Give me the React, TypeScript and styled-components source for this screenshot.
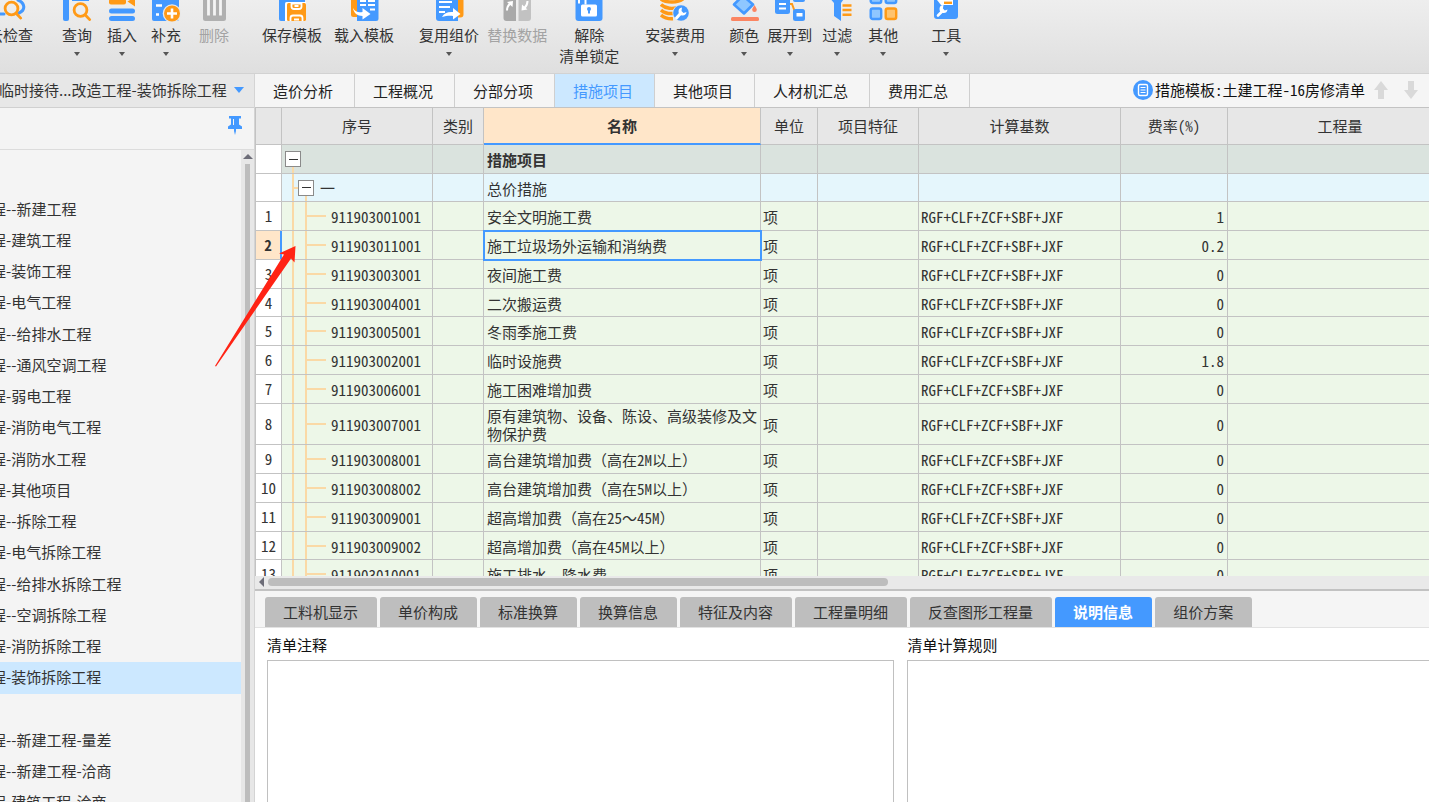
import React from 'react';
import styled, { createGlobalStyle, css } from 'styled-components';

const BLUE = '#4499ff';
const ORANGE = '#ff9a17';
const LINE = '#c3c3c3';

const GlobalStyle = createGlobalStyle`
  *, *::before, *::after { box-sizing: border-box; }
  body {
    margin: 0;
    overflow: hidden;
    font-family: 'Noto Sans CJK SC', sans-serif;
    font-size: 15px;
    color: #333;
    background: #f4f4f4;
  }
  button, textarea { font: inherit; color: inherit; margin: 0; }
  button { border: 0; padding: 0; background: none; white-space: nowrap; cursor: pointer; }
`;

/* ---------- Shell ---------- */

const Shell = styled.div`
  display: flex;
  flex-direction: column;
  height: 100vh;
  overflow: hidden;
`;

const Body = styled.div`
  position: relative;
  display: flex;
  flex: 1;
  min-height: 0;
`;

const Main = styled.main`
  display: flex;
  flex-direction: column;
  flex: 1;
  min-width: 0;
  border-left: 1px solid #d4d4d4;
`;

/* ---------- Toolbar ---------- */

const Toolbar = styled.header`
  display: flex;
  align-items: flex-start;
  flex: 0 0 74px;
  border-bottom: 1px solid #d2d2d2;
  background: linear-gradient(#eeeeee, #dfdfdf);
  overflow: hidden;
`;

const ToolButton = styled.button<{ $gap: number }>`
  display: flex;
  flex-direction: column;
  align-items: center;
  flex: none;
  margin-left: ${p => p.$gap}px;
  line-height: 21px;
  color: #333;
  &:disabled { color: #a3a3a3; cursor: default; }
`;

const ToolIcon = styled.svg`
  display: block;
  width: 30px;
  height: 24px;
`;

const Caret = styled.span`
  margin-top: 7px;
  border: 3px solid transparent;
  border-top: 4px solid #555;
  border-bottom: 0;
`;

type Tool = { label: string[]; gap: number; caret?: boolean; disabled?: boolean; icon: React.ReactNode };

const magnifier = (cx: number, cy: number) => (
  <g fill="none" stroke={ORANGE} strokeWidth="2.8" strokeLinecap="round">
    <circle cx={cx} cy={cy} r="6.4" />
    <path d={`M${cx + 4.8} ${cy + 5} l4.4 4.6`} />
  </g>
);

const tools: Tool[] = [
  {
    label: ['云检查'], gap: -12,
    icon: (
      <>
        <path d="M4 14H8M22 0c7 3 8 10 1 13" fill="none" stroke={BLUE} strokeWidth="3" strokeLinecap="round" />
        {magnifier(15.5, 8.5)}
      </>
    ),
  },
  {
    label: ['查询'], gap: 29, caret: true,
    icon: (
      <>
        <path d="M1 0h6v19a2 2 0 0 1-2 2H3a2 2 0 0 1-2-2z" fill={BLUE} />
        <path d="M10 0h17v1H10z" fill={BLUE} />
        {magnifier(18.5, 10)}
      </>
    ),
  },
  {
    label: ['插入'], gap: 15, caret: true,
    icon: (
      <>
        <rect x="2" y="-1" width="17" height="5.5" rx="2" fill={ORANGE} />
        <path d="M20.500 1.500L28 -3V6.500z" fill={ORANGE} />
        <rect x="2" y="8.500" width="26" height="5" rx="2.500" fill={BLUE} />
        <rect x="2" y="16" width="26" height="5" rx="2.500" fill={BLUE} />
      </>
    ),
  },
  {
    label: ['补充'], gap: 14, caret: true,
    icon: (
      <>
        <path d="M1 0h27v19a2 2 0 0 1-2 2H3a2 2 0 0 1-2-2z" fill={BLUE} />
        <path d="M5 5.500h6M5 14.500h3" stroke="#fff" strokeWidth="2.400" />
        <circle cx="21" cy="13.500" r="9.300" fill="#e9e9e9" />
        <circle cx="21" cy="13.500" r="8" fill={ORANGE} />
        <path d="M21 8.500v10M16 13.500h10" stroke="#fff" strokeWidth="2.600" />
      </>
    ),
  },
  {
    label: ['删除'], gap: 18, disabled: true,
    icon: (
      <>
        <path d="M4 0h23v18.500a2.500 2.500 0 0 1-2.500 2.500h-18a2.500 2.500 0 0 1-2.500-2.500z" fill="#b0b0b0" />
        <path d="M9.500 0v15.500M15.500 0v15.500M21.500 0v15.500" stroke="#f4f4f4" strokeWidth="2.800" />
      </>
    ),
  },
  {
    label: ['保存模板'], gap: 33,
    icon: (
      <>
        <path d="M2 0h26v3H10v18H4a2 2 0 0 1-2-2z" fill={BLUE} />
        <path d="M8 21V3.500A1.500 1.500 0 0 1 9.500 2H29v19z" fill="#fff" />
        <rect x="10" y="3" width="19" height="18" rx="1.500" fill={ORANGE} />
        <path d="M14.500 3.500v3a2.500 2.500 0 0 0 2.500 2.500h5a2.500 2.500 0 0 0 2.500-2.500v-3zM13.500 21v-3a2.500 2.500 0 0 1 2.500-2.500h7a2.500 2.500 0 0 1 2.500 2.500v3M17.500 6h4M17 19.500h5" fill="none" stroke="#fff" strokeWidth="1.800" />
      </>
    ),
  },
  {
    label: ['载入模板'], gap: 12,
    icon: (
      <>
        <path d="M2 0h8v17H4.500a2.500 2.500 0 0 1-2.500-2.500z" fill={ORANGE} />
        <path d="M8 0h21.500v18.500a2.500 2.500 0 0 1-2.500 2.500H8z" fill={BLUE} />
        <path d="M11 1h6M19 1h7M11 5h6M19 5h7M21 9.500h5" stroke="#fff" strokeWidth="2" />
        <path d="M4 8c2 4 6 5 9.500 4V8l8 6-8 5.500v-3.500C8.500 16 4.500 13 4 8z" fill="#fff" />
      </>
    ),
  },
  {
    label: ['复用组价'], gap: 25, caret: true,
    icon: (
      <>
        <path d="M20 0h9.500v14.500a3 3 0 0 1-3 3H20z" fill={ORANGE} />
        <path d="M2 0h22v21H5a3 3 0 0 1-3-3z" fill={BLUE} />
        <path d="M5 2h13M5 7h11M5 12h6" stroke="#fff" strokeWidth="2" />
        <path d="M8 17c2-4 6-5.500 11-5V8l7.500 6-7.500 5.500v-3.500c-4-.5-7 0-11 1z" fill="#fff" />
      </>
    ),
  },
  {
    label: ['替换数据'], gap: 8, disabled: true,
    icon: (
      <>
        <path d="M1.500 0H14v21H4.500a3 3 0 0 1-3-3z" fill="#a9a9a9" />
        <path d="M16.500 0h12.500v18a3 3 0 0 1-3 3h-9.500z" fill="#c2c2c2" />
        <path d="M5 10.500c0-3 1-5 3-7M25.500 1c0 3-1 5-3 7" fill="none" stroke="#fff" strokeWidth="2" />
        <path d="M5 2l6-1-.5 6zM25.500 9.500l-6 1 .5-6z" fill="#fff" />
      </>
    ),
  },
  {
    label: ['解除', '清单锁定'], gap: 12,
    icon: (
      <>
        <path d="M1.500 0h27v18a3 3 0 0 1-3 3h-21a3 3 0 0 1-3-3z" fill={BLUE} />
        <rect x="7" y="4.500" width="16" height="12" rx="1.500" fill="#fff" />
        <path d="M5 3.500V0M11.500 4.500V0" stroke="#fff" strokeWidth="2" />
        <circle cx="15" cy="9" r="2" fill={BLUE} />
        <path d="M15 9v4.500" stroke={BLUE} strokeWidth="2" />
      </>
    ),
  },
  {
    label: ['安装费用'], gap: 26, caret: true,
    icon: (
      <>
        <path d="M1 -1c5 4 17 4 22 0M1 4.500c5 4.500 12 4.500 16 3M1 10c4 3.500 8 3.800 12 3.500M1 15c4 3.500 8 4 12 3.700" fill="none" stroke={ORANGE} strokeWidth="3.400" />
        <circle cx="21" cy="13" r="8.600" fill="#e9e9e9" />
        <circle cx="21" cy="13" r="7.800" fill={BLUE} />
        <path d="M16.500 18l4-4.500" stroke="#fff" strokeWidth="3" strokeLinecap="round" />
        <path d="M22 7.500a4 4 0 1 0 4.500 4.500l-3 1-2-2z" fill="#fff" />
      </>
    ),
  },
  {
    label: ['颜色'], gap: 24, caret: true,
    icon: (
      <>
        <path d="M5 4.500L12 -2.500h4l8 7-9 9z" fill="#8fc7ff" stroke={BLUE} strokeWidth="2.600" strokeLinejoin="round" />
        <path d="M25.500 5c1.500 2.500 2.300 3.600 2.300 4.800a2.300 2.300 0 0 1-4.600 0C23.200 8.600 24 7.500 25.500 5z" fill="#fb8562" />
        <rect x="2" y="17" width="28" height="4" rx="1.500" fill="#fb8562" />
      </>
    ),
  },
  {
    label: ['展开到'], gap: 8, caret: true,
    icon: (
      <>
        <path d="M14 4h3l3 8" fill="none" stroke={ORANGE} strokeWidth="2" />
        <path d="M0 0h15v11.500a2.500 2.500 0 0 1-2.500 2.500h-10A2.500 2.500 0 0 1 0 11.500z" fill={BLUE} />
        <path d="M4 4h7M4 8.500h7" stroke="#fff" strokeWidth="2" />
        <rect x="18" y="-6" width="12" height="8" rx="2" fill={BLUE} />
        <rect x="18" y="9" width="12" height="12" rx="2.500" fill={BLUE} />
        <rect x="21.500" y="13" width="6" height="3.500" fill="#fff" />
      </>
    ),
  },
  {
    label: ['过滤'], gap: 10, caret: true,
    icon: (
      <>
        <path d="M6 -4h18l-5 7v18l-7-5V3z" fill={BLUE} />
        <path d="M20.500 5.500h9M20.500 10h9M20.500 14.800h9" stroke={ORANGE} strokeWidth="2.400" />
      </>
    ),
  },
  {
    label: ['其他'], gap: 16, caret: true,
    icon: (
      <g strokeWidth="2.400">
        <rect x="2.700" y="-7" width="10.500" height="10" rx="2" fill="#8fc7ff" stroke={BLUE} />
        <rect x="17.700" y="-7" width="10.500" height="10" rx="2" fill="#8fc7ff" stroke={BLUE} />
        <rect x="2.700" y="8.500" width="10.500" height="10.500" rx="2" fill="#8fc7ff" stroke={BLUE} />
        <rect x="17.700" y="8.500" width="10.500" height="10.500" rx="2" fill="#ffc36e" stroke={ORANGE} />
      </g>
    ),
  },
  {
    label: ['工具'], gap: 33, caret: true,
    icon: (
      <>
        <path d="M3 0h24v16a3 3 0 0 1-3 3H6a3 3 0 0 1-3-3z" fill={BLUE} />
        <path d="M6 0h16v5H10z" fill="#fff" />
        <path d="M13 2.800h8" stroke={ORANGE} strokeWidth="2.400" />
        <path d="M7 15.500l4.500-4.500" stroke="#fff" strokeWidth="2.600" strokeLinecap="round" />
        <path d="M12.500 5a4 4 0 1 0 4 4.500l-2.700 1-1.900-2z" fill="#fff" />
      </>
    ),
  },
];

/* ---------- Sidebar ---------- */

const Sidebar = styled.aside`
  display: flex;
  flex-direction: column;
  flex: 0 0 254px;
  min-width: 0;
  overflow: hidden;
  background: #f4f4f4;
`;

const ProjectPicker = styled.button`
  display: flex;
  align-items: center;
  justify-content: space-between;
  flex: 0 0 34px;
  padding: 0 10px 2px 0;
  margin-left: -1px;
  background: #e7e7e7;
  border-bottom: 1px solid #d0d0d0;
`;

const PickerArrow = styled.span`
  border: 5px solid transparent;
  border-top: 6px solid ${BLUE};
  border-bottom: 0;
`;

const PinBar = styled.div`
  display: flex;
  align-items: center;
  justify-content: flex-end;
  flex: 0 0 42px;
  padding: 0 12px 6px 0;
  border-bottom: 1px solid #dcdcdc;
`;

const TreeArea = styled.div`
  display: flex;
  flex: 1;
  min-height: 0;
`;

const ProjectList = styled.ul`
  flex: 1;
  min-width: 0;
  margin: 0;
  padding: 44px 0 0;
  list-style: none;
  overflow: hidden;
`;

const ProjectItem = styled.li<{ $active?: boolean }>`
  height: 31px;
  line-height: 29px;
  white-space: nowrap;
  background: ${p => (p.$active ? '#cce8ff' : 'transparent')};
  &:nth-child(4n) { height: 32px; }
`;

const ProjectLink = styled.a`
  display: block;
  margin-left: -9px;
  color: #333;
  text-decoration: none;
`;

const VScroll = styled.div`
  display: flex;
  flex-direction: column;
  align-items: center;
  flex: 0 0 13px;
  gap: 5px;
  padding-top: 4px;
  background: #e7e7e7;
`;

const UpArrow = styled.span`
  border: 5px solid transparent;
  border-bottom: 5px solid #6d6d78;
  border-top: 0;
`;

const VThumb = styled.span`
  flex: 1;
  width: 5px;
  background: #bdbdbd;
`;

const projects = [
  '程--新建工程', '程-建筑工程', '程-装饰工程', '程-电气工程', '程--给排水工程', '程--通风空调工程',
  '程-弱电工程', '程-消防电气工程', '程-消防水工程', '程-其他项目', '程--拆除工程', '程-电气拆除工程',
  '程--给排水拆除工程', '程--空调拆除工程', '程-消防拆除工程', '程-装饰拆除工程', '',
  '程--新建工程-量差', '程--新建工程-洽商', '程-建筑工程-洽商',
];

/* ---------- Section tabs ---------- */

const SectionBar = styled.nav`
  display: flex;
  align-items: stretch;
  flex: 0 0 34px;
  border-bottom: 1px solid ${LINE};
  background: #f5f5f5;
`;

const SectionTab = styled.button<{ $active?: boolean }>`
  padding: 0 21px 0 18px;
  border-right: 1px solid #cfcfcf;
  color: ${p => (p.$active ? BLUE : '#222')};
  background: ${p => (p.$active ? '#cce8ff' : '#f5f5f5')};
`;

const TemplateInfo = styled.div`
  display: flex;
  align-items: center;
  margin-left: auto;
  padding: 0 11px 2px 0;
  white-space: nowrap;
  color: #111;
  font-feature-settings: 'hwid';
`;

const MoveButton = styled.button`
  display: flex;
  margin-left: 9px;
  & + & { margin-left: 16px; }
`;

/* ---------- Grid ---------- */

const GridView = styled.div`
  flex: 1;
  min-height: 0;
  overflow: hidden;
  background: #edf7e8;
  border-left: 1px solid ${LINE};
`;

const Grid = styled.table`
  width: calc(100% + 24px);
  table-layout: fixed;
  border-collapse: separate;
  border-spacing: 0;
  font-feature-settings: 'hwid';
  line-height: 18px;
`;

const Col = styled.col<{ $w?: number }>`
  width: ${p => (p.$w ? `${p.$w}px` : 'auto')};
`;

const Th = styled.th<{ $active?: boolean }>`
  height: 37px;
  padding: 0;
  font-weight: ${p => (p.$active ? 700 : 400)};
  background: ${p => (p.$active ? '#ffe6c9' : '#e7e7e7')};
  border-right: 1px solid ${LINE};
  border-bottom: ${p => (p.$active ? `2px solid ${BLUE}` : `1px solid ${LINE}`)};
`;

type Kind = 'root' | 'group' | 'item';
const rowColor = { root: '#dae3de', group: '#e5f6fc', item: '#edf7e8' };

const Row = styled.tr<{ $kind: Kind; $tall?: boolean }>`
  height: ${p => (p.$tall ? 41 : 29)}px;
  background: ${p => rowColor[p.$kind]};
  font-weight: ${p => (p.$kind === 'root' ? 700 : 400)};
  ${p => !p.$tall && css`&:nth-child(4n + 2) { height: 28px; }`}
`;

const Td = styled.td<{ $align?: string; $active?: boolean }>`
  padding: 2px 3px 0 2px;
  text-align: ${p => p.$align || 'left'};
  border-right: 1px solid ${LINE};
  border-bottom: 1px solid ${LINE};
  ${p => p.$active && css`outline: 2px solid ${BLUE}; outline-offset: -1px;`}
`;

const NameCell = styled(Td)`
  padding-left: 3px;
  padding-right: 0;
  font-feature-settings: normal;
`;

const Half = styled.span`
  font-feature-settings: 'hwid';
`;

const RowNo = styled.th<{ $active?: boolean }>`
  padding: 0;
  font-weight: ${p => (p.$active ? 700 : 400)};
  background: ${p => (p.$active ? '#ffe6c9' : '#fff')};
  border-right: ${p => (p.$active ? `2px solid ${BLUE}` : `1px solid ${LINE}`)};
  border-bottom: 1px solid ${LINE};
`;

const wire = 'linear-gradient(#fad9a6, #fad9a6)';

const CodeCell = styled(Td)<{ $kind: Kind }>`
  padding-top: ${p => (p.$kind === 'item' ? 2 : 0)}px;
  padding-left: ${p => ({ root: 3, group: 16, item: 49 })[p.$kind]}px;
  background-repeat: no-repeat;
  ${p => p.$kind === 'root' && css`
    background-image: ${wire};
    background-size: 2px 50%;
    background-position: 10px 100%;
  `}
  ${p => p.$kind === 'group' && css`
    background-image: ${wire}, ${wire}, ${wire};
    background-size: 2px 100%, 6px 2px, 2px 50%;
    background-position: 10px 0, 10px 50%, 23px 100%;
  `}
  ${p => p.$kind === 'item' && css`
    background-image: ${wire}, ${wire}, ${wire};
    background-size: 2px 100%, 2px 100%, 20px 2px;
    background-position: 10px 0, 23px 0, 24px 50%;
  `}
`;

const CodeLine = styled.div`
  display: flex;
  align-items: center;
  gap: 6px;
`;

const Toggle = styled.button`
  display: flex;
  align-items: center;
  justify-content: center;
  width: 16px;
  height: 16px;
  border: 1px solid #8a8a8a;
  background: #fff;
  &::after { content: ''; width: 9px; height: 1px; background: #333; }
`;

const HScroll = styled.div`
  display: flex;
  align-items: center;
  flex: 0 0 13px;
  gap: 4px;
  padding: 0 0 1px 4px;
  background: #e9e9e9;
`;

const LeftArrow = styled.span`
  border: 5px solid transparent;
  border-right: 5px solid #6d6d78;
  border-left: 0;
`;

const HThumb = styled.span`
  width: 53%;
  height: 8px;
  border-radius: 4px;
  background: #bdbdbd;
`;

type Item = { no: number; code: string; name: string; rate: string };
const items: Item[] = [
  { no: 1, code: '911903001001', name: '安全文明施工费', rate: '1' },
  { no: 2, code: '911903011001', name: '施工垃圾场外运输和消纳费', rate: '0.2' },
  { no: 3, code: '911903003001', name: '夜间施工费', rate: '0' },
  { no: 4, code: '911903004001', name: '二次搬运费', rate: '0' },
  { no: 5, code: '911903005001', name: '冬雨季施工费', rate: '0' },
  { no: 6, code: '911903002001', name: '临时设施费', rate: '1.8' },
  { no: 7, code: '911903006001', name: '施工困难增加费', rate: '0' },
  { no: 8, code: '911903007001', name: '原有建筑物、设备、陈设、高级装修及文物保护费', rate: '0' },
  { no: 9, code: '911903008001', name: '高台建筑增加费（高在2M以上）', rate: '0' },
  { no: 10, code: '911903008002', name: '高台建筑增加费（高在5M以上）', rate: '0' },
  { no: 11, code: '911903009001', name: '超高增加费（高在25～45M）', rate: '0' },
  { no: 12, code: '911903009002', name: '超高增加费（高在45M以上）', rate: '0' },
  { no: 13, code: '911903010001', name: '施工排水、降水费', rate: '0' },
];

/* Digits and Latin letters take half-width forms; CJK punctuation stays full width. */
const mixedWidth = (text: string) =>
  text.split(/([0-9M]+)/).map((part, i) => (i % 2 ? <Half key={i}>{part}</Half> : part));

const columns = ['序号', '类别', '名称', '单位', '项目特征', '计算基数', '费率(%)', '工程量'];
const widths = [26, 151, 51, 277, 57, 101, 202, 107, undefined];

/* ---------- Detail panel ---------- */

const Detail = styled.section`
  display: flex;
  flex-direction: column;
  flex: 0 0 213px;
  border-top: 2px solid #c2c2c2;
  background: #fff;
`;

const DetailTabs = styled.div`
  display: flex;
  gap: 3px;
  flex: 0 0 37px;
  padding: 6px 0 0 10px;
  background: #f5f5f5;
  border-bottom: 1px solid #e2e2e2;
`;

const DetailTab = styled.button<{ $active?: boolean }>`
  padding: 0 19px 2px 18px;
  border-radius: 3px 3px 0 0;
  color: ${p => (p.$active ? '#fff' : '#333')};
  font-weight: ${p => (p.$active ? 700 : 400)};
  background: ${p => (p.$active ? BLUE : '#bebebe')};
`;

const Notes = styled.div`
  display: grid;
  grid-template-columns: 54% 1fr;
  gap: 13px;
  flex: 1;
  padding: 2px 0 0 12px;
`;

const Note = styled.div`
  display: flex;
  flex-direction: column;
  color: #111;
`;

const NoteLabel = styled.label`
  line-height: 30px;
`;

const NoteBox = styled.textarea<{ $open?: boolean }>`
  flex: 1;
  width: 100%;
  resize: none;
  border: 1px solid #c0c0c0;
  border-bottom: 0;
  ${p => p.$open && css`border-right: 0;`}
  border-radius: 0;
  background: #fff;
  outline: 0;
`;

const Pointer = styled.svg`
  position: absolute;
  left: 215px;
  top: 171px;
  width: 82px;
  height: 122px;
  pointer-events: none;
`;

const sections = ['造价分析', '工程概况', '分部分项', '措施项目', '其他项目', '人材机汇总', '费用汇总'];
const details = ['工料机显示', '单价构成', '标准换算', '换算信息', '特征及内容', '工程量明细', '反查图形工程量', '说明信息', '组价方案'];

export default function App() {
  return (
    <Shell>
      <GlobalStyle />
      <Toolbar>
        {tools.map(t => (
          <ToolButton key={t.label[0]} $gap={t.gap} disabled={t.disabled}>
            <ToolIcon viewBox="0 0 30 24" aria-hidden="true">{t.icon}</ToolIcon>
            {t.label.map(line => <span key={line}>{line}</span>)}
            {t.caret && <Caret />}
          </ToolButton>
        ))}
      </Toolbar>

      <Body>
        <Sidebar>
          <ProjectPicker>
            <span>临时接待...改造工程-装饰拆除工程</span>
            <PickerArrow />
          </ProjectPicker>
          <PinBar>
            <button aria-label="固定">
              <svg width="14" height="19" viewBox="0 0 14 19" display="block">
                <path d="M1 0h12v2.500h-2v6l3 2V13H8v2l-1 4-1-4v-2H0v-2.500l3-2v-6H1z" fill={BLUE} />
                <path d="M5.500 3v6" stroke="#f4f4f4" />
              </svg>
            </button>
          </PinBar>
          <TreeArea>
            <ProjectList>
              {projects.map((p, i) => (
                <ProjectItem key={i} $active={i === 15}>
                  {p && <ProjectLink href="#">{p}</ProjectLink>}
                </ProjectItem>
              ))}
            </ProjectList>
            <VScroll><UpArrow /><VThumb /></VScroll>
          </TreeArea>
        </Sidebar>

        <Main>
          <SectionBar>
            {sections.map(s => <SectionTab key={s} $active={s === '措施项目'}>{s}</SectionTab>)}
            <TemplateInfo>
              <svg width="22" height="20" viewBox="0 0 22 20" aria-hidden="true">
                <circle cx="10" cy="10" r="10" fill={BLUE} />
                <rect x="5.500" y="4.500" width="9" height="11" rx="1.500" fill="none" stroke="#fff" strokeWidth="1.400" />
                <path d="M7.500 7.500h5M7.500 10h5M7.500 12.500h5" stroke="#fff" />
              </svg>
              <span>措施模板:土建工程-16房修清单</span>
              <MoveButton aria-label="上移">
                <svg width="14" height="18" viewBox="0 0 14 18"><path d="M7 0l7 9h-4v9H4V9H0z" fill="#d9d9d9" /></svg>
              </MoveButton>
              <MoveButton aria-label="下移">
                <svg width="14" height="18" viewBox="0 0 14 18"><path d="M7 18l7-9h-4V0H4v9H0z" fill="#d9d9d9" /></svg>
              </MoveButton>
            </TemplateInfo>
          </SectionBar>

          <GridView>
            <Grid>
              <colgroup>{widths.map((w, i) => <Col key={i} $w={w} />)}</colgroup>
              <thead>
                <tr>
                  <Th />
                  {columns.map(c => <Th key={c} $active={c === '名称'}>{c}</Th>)}
                </tr>
              </thead>
              <tbody>
                <Row $kind="root">
                  <RowNo />
                  <CodeCell $kind="root"><Toggle aria-label="折叠" /></CodeCell>
                  <Td /><NameCell>措施项目</NameCell><Td /><Td /><Td /><Td /><Td />
                </Row>
                <Row $kind="group">
                  <RowNo />
                  <CodeCell $kind="group"><CodeLine><Toggle aria-label="折叠" />一</CodeLine></CodeCell>
                  <Td /><NameCell>总价措施</NameCell><Td /><Td /><Td /><Td /><Td />
                </Row>
                {items.map(it => (
                  <Row key={it.no} $kind="item" $tall={it.no === 8}>
                    <RowNo $active={it.no === 2}>{it.no}</RowNo>
                    <CodeCell $kind="item">{it.code}</CodeCell>
                    <Td />
                    <NameCell $active={it.no === 2}>{mixedWidth(it.name)}</NameCell>
                    <Td>项</Td>
                    <Td />
                    <Td>RGF+CLF+ZCF+SBF+JXF</Td>
                    <Td $align="right">{it.rate}</Td>
                    <Td />
                  </Row>
                ))}
              </tbody>
            </Grid>
          </GridView>
          <HScroll><LeftArrow /><HThumb /></HScroll>

          <Detail>
            <DetailTabs>
              {details.map(d => <DetailTab key={d} $active={d === '说明信息'}>{d}</DetailTab>)}
            </DetailTabs>
            <Notes>
              <Note>
                <NoteLabel htmlFor="note">清单注释</NoteLabel>
                <NoteBox id="note" />
              </Note>
              <Note>
                <NoteLabel htmlFor="rule">清单计算规则</NoteLabel>
                <NoteBox id="rule" $open />
              </Note>
            </Notes>
          </Detail>
        </Main>

        <Pointer viewBox="0 0 82 122" aria-hidden="true">
          <path d="M80.500 1L79.500 17.500L76 13.500L1 121.500L0 121L69 9.500L64 8.500z" fill="#ff2314" />
        </Pointer>
      </Body>
    </Shell>
  );
}
